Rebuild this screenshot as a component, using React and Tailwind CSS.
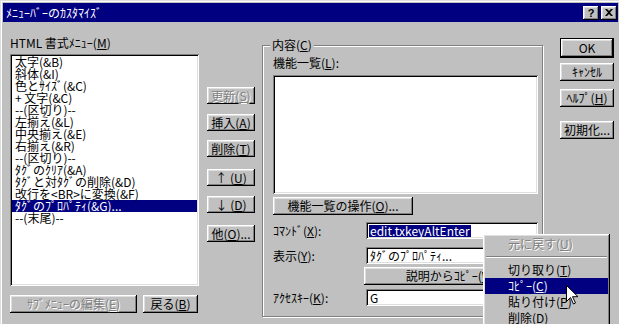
import React from 'react';

const raised =
  'bg-[#c0c0c0] shadow-[inset_-1px_-1px_0_#000,inset_1px_1px_0_#fff,inset_-2px_-2px_0_#808080,inset_2px_2px_0_#dfdfdf]';
const defBtn =
  'bg-[#c0c0c0] shadow-[inset_0_0_0_1px_#000,inset_-2px_-2px_0_#000,inset_2px_2px_0_#fff,inset_-3px_-3px_0_#808080,inset_3px_3px_0_#dfdfdf]';
const sunken =
  'bg-white shadow-[inset_1px_1px_0_#808080,inset_-1px_-1px_0_#fff,inset_2px_2px_0_#000,inset_-2px_-2px_0_#dfdfdf]';
const grayed = 'text-[#808080] [text-shadow:1px_1px_0_#fff]';

function U({ children }) {
  return <span className="underline underline-offset-[1px]">{children}</span>;
}

function Btn({ className = '', off, children }) {
  return (
    <div className={`${raised} flex items-center justify-center ${off ? grayed : ''} ${className}`}>
      {children}
    </div>
  );
}

const menuItems = [
  '太字(&B)',
  '斜体(&I)',
  '色とｻｲｽﾞ(&C)',
  '+ 文字(&C)',
  '--(区切り)--',
  '左揃え(&L)',
  '中央揃え(&E)',
  '右揃え(&R)',
  '--(区切り)--',
  'ﾀｸﾞのｸﾘｱ(&A)',
  'ﾀｸﾞと対ﾀｸﾞの削除(&D)',
  '改行を<BR>に変換(&F)',
  'ﾀｸﾞのﾌﾟﾛﾊﾟﾃｨ(&G)...',
  '--(末尾)--',
];

export default function App() {
  return (
    <div className="relative w-[619px] h-[324px] overflow-hidden bg-[#c0c0c0] text-black text-[12px] leading-[12px] font-['Noto_Sans_CJK_JP',sans-serif] shadow-[inset_1px_1px_0_#dfdfdf,inset_2px_2px_0_#fff]">
      {/* title bar */}
      <div className="ml-[3px] mt-[3px] mr-[1px] h-[19px] bg-[#000080] flex items-center justify-between pl-[3px] pr-[1px]">
        <span className="text-white">ﾒﾆｭｰﾊﾞｰのｶｽﾀﾏｲｽﾞ</span>
        <div className="flex gap-[2px]">
          <div className={`${raised} w-[16px] h-[14px] flex items-center justify-center font-bold text-[11px] font-['Liberation_Sans',sans-serif]`}>?</div>
          <div className={`${raised} w-[16px] h-[14px] flex items-center justify-center`}>
            <svg width="8" height="7" viewBox="0 0 8 7">
              <path d="M0 0h2l2 2 2-2h2L5 3.5 8 7H6L4 5 2 7H0l3-3.5z" fill="#000" />
            </svg>
          </div>
        </div>
      </div>

      {/* body */}
      <div className="flex pl-[10px]">
        {/* left column */}
        <div className="w-[189px] flex flex-col">
          <div className="mt-[15px] h-[12px]">
            HTML 書式ﾒﾆｭｰ(<U>M</U>)
          </div>
          <div className={`${sunken} mt-[5px] h-[232px] p-[2px]`}>
            {menuItems.map((t, i) => (
              <div
                key={i}
                className={`h-[12px] leading-[12px] pl-[3px] whitespace-nowrap ${i === 12 ? 'bg-[#000080] text-white' : ''}`}
              >
                {t}
              </div>
            ))}
          </div>
          <div className="mt-[9px] flex gap-[6px]">
            <Btn off className="w-[127px] h-[18px]">
              ｻﾌﾞﾒﾆｭｰの編集(<U>E</U>)
            </Btn>
            <Btn className="w-[55px] h-[18px]">
              戻る(<U>B</U>)
            </Btn>
          </div>
        </div>

        {/* middle buttons */}
        <div className="ml-[8px] w-[48px] flex flex-col pt-[65px]">
          <Btn off className="h-[17px]">
            更新(<U>S</U>)
          </Btn>
          <Btn className="h-[17px] mt-[10px]">
            挿入(<U>A</U>)
          </Btn>
          <Btn className="h-[17px] mt-[9px]">
            削除(<U>T</U>)
          </Btn>
          <Btn className="h-[17px] mt-[12px]">
            ↑ (<U>U</U>)
          </Btn>
          <Btn className="h-[17px] mt-[10px]">
            ↓ (<U>D</U>)
          </Btn>
          <Btn className="h-[17px] mt-[12px]">
            他(<U>O</U>)...
          </Btn>
        </div>

        {/* group box */}
        <fieldset className="ml-[7px] mt-[17px] w-[281px] h-[278px] border border-[#808080] shadow-[inset_1px_1px_0_#fff,1px_1px_0_#fff]">
          <legend className="ml-[7px] px-[2px] h-[12px] leading-[12px] bg-[#c0c0c0]">
            内容(<U>C</U>)
          </legend>
          <div className="pl-[10px] flex flex-col">
            <div className="mt-[6px] h-[12px]">
              機能一覧(<U>L</U>):
            </div>
            <div className={`${sunken} mt-[6px] w-[265px] h-[119px]`} />
            <Btn className="mt-[3px] w-[140px] h-[18px]">
              機能一覧の操作(<U>O</U>)...
            </Btn>
            <div className="mt-[7px] flex items-center">
              <div className="w-[93px]">
                ｺﾏﾝﾄﾞ(<U>X</U>):
              </div>
              <div className={`${sunken} w-[172px] h-[17px] flex items-center pl-[3px]`}>
                <span className="bg-[#000080] text-white px-[1px]">edit.txkeyAltEnter</span>
              </div>
            </div>
            <div className="mt-[8px] flex items-center">
              <div className="w-[93px]">
                表示(<U>Y</U>):
              </div>
              <div className={`${sunken} w-[172px] h-[17px] flex items-center pl-[4px]`}>ﾀｸﾞのﾌﾟﾛﾊﾟﾃｨ...</div>
            </div>
            <Btn className="mt-[3px] ml-[91px] w-[174px] h-[18px]">
              説明からｺﾋﾟｰ(<U>W</U>)
            </Btn>
            <div className="mt-[4px] flex items-center">
              <div className="w-[93px]">
                ｱｸｾｽｷｰ(<U>K</U>):
              </div>
              <div className={`${sunken} w-[172px] h-[17px] flex items-center pl-[4px]`}>G</div>
            </div>
          </div>
        </fieldset>

        {/* right buttons */}
        <div className="ml-[17px] w-[54px] flex flex-col pt-[16px]">
          <div className={`${defBtn} h-[20px] flex items-center justify-center`}>OK</div>
          <Btn className="h-[18px] mt-[5px]">ｷｬﾝｾﾙ</Btn>
          <Btn className="h-[18px] mt-[8px]">
            ﾍﾙﾌﾟ(<U>H</U>)
          </Btn>
          <Btn className="h-[18px] mt-[14px]">初期化...</Btn>
        </div>
      </div>

      {/* context menu */}
      <div className={`${raised} absolute left-[483px] top-[234px] w-[127px] h-[110px] p-[2px]`}>
        <div className={`h-[16px] leading-[16px] pl-[23px] ${grayed}`}>
          元に戻す(<U>U</U>)
        </div>
        <div className="my-[4px] mx-[1px] h-[2px] border-t border-[#808080] border-b border-b-white" />
        <div className="h-[16px] leading-[16px] pl-[23px]">
          切り取り(<U>T</U>)
        </div>
        <div className="h-[16px] leading-[16px] pl-[23px] bg-[#000080] text-white">
          ｺﾋﾟｰ(<U>C</U>)
        </div>
        <div className="h-[16px] leading-[16px] pl-[23px]">
          貼り付け(<U>P</U>)
        </div>
        <div className="h-[16px] leading-[16px] pl-[23px]">
          削除(<U>D</U>)
        </div>
      </div>

      {/* mouse pointer */}
      <svg className="absolute left-[566px] top-[285px]" width="12" height="20" viewBox="0 0 12 20">
        <path d="M0.5 0.5v16l4-4 3 6.5 2-1-3-6.3h5.5z" fill="#fff" stroke="#000" strokeWidth="1" />
      </svg>
    </div>
  );
}
